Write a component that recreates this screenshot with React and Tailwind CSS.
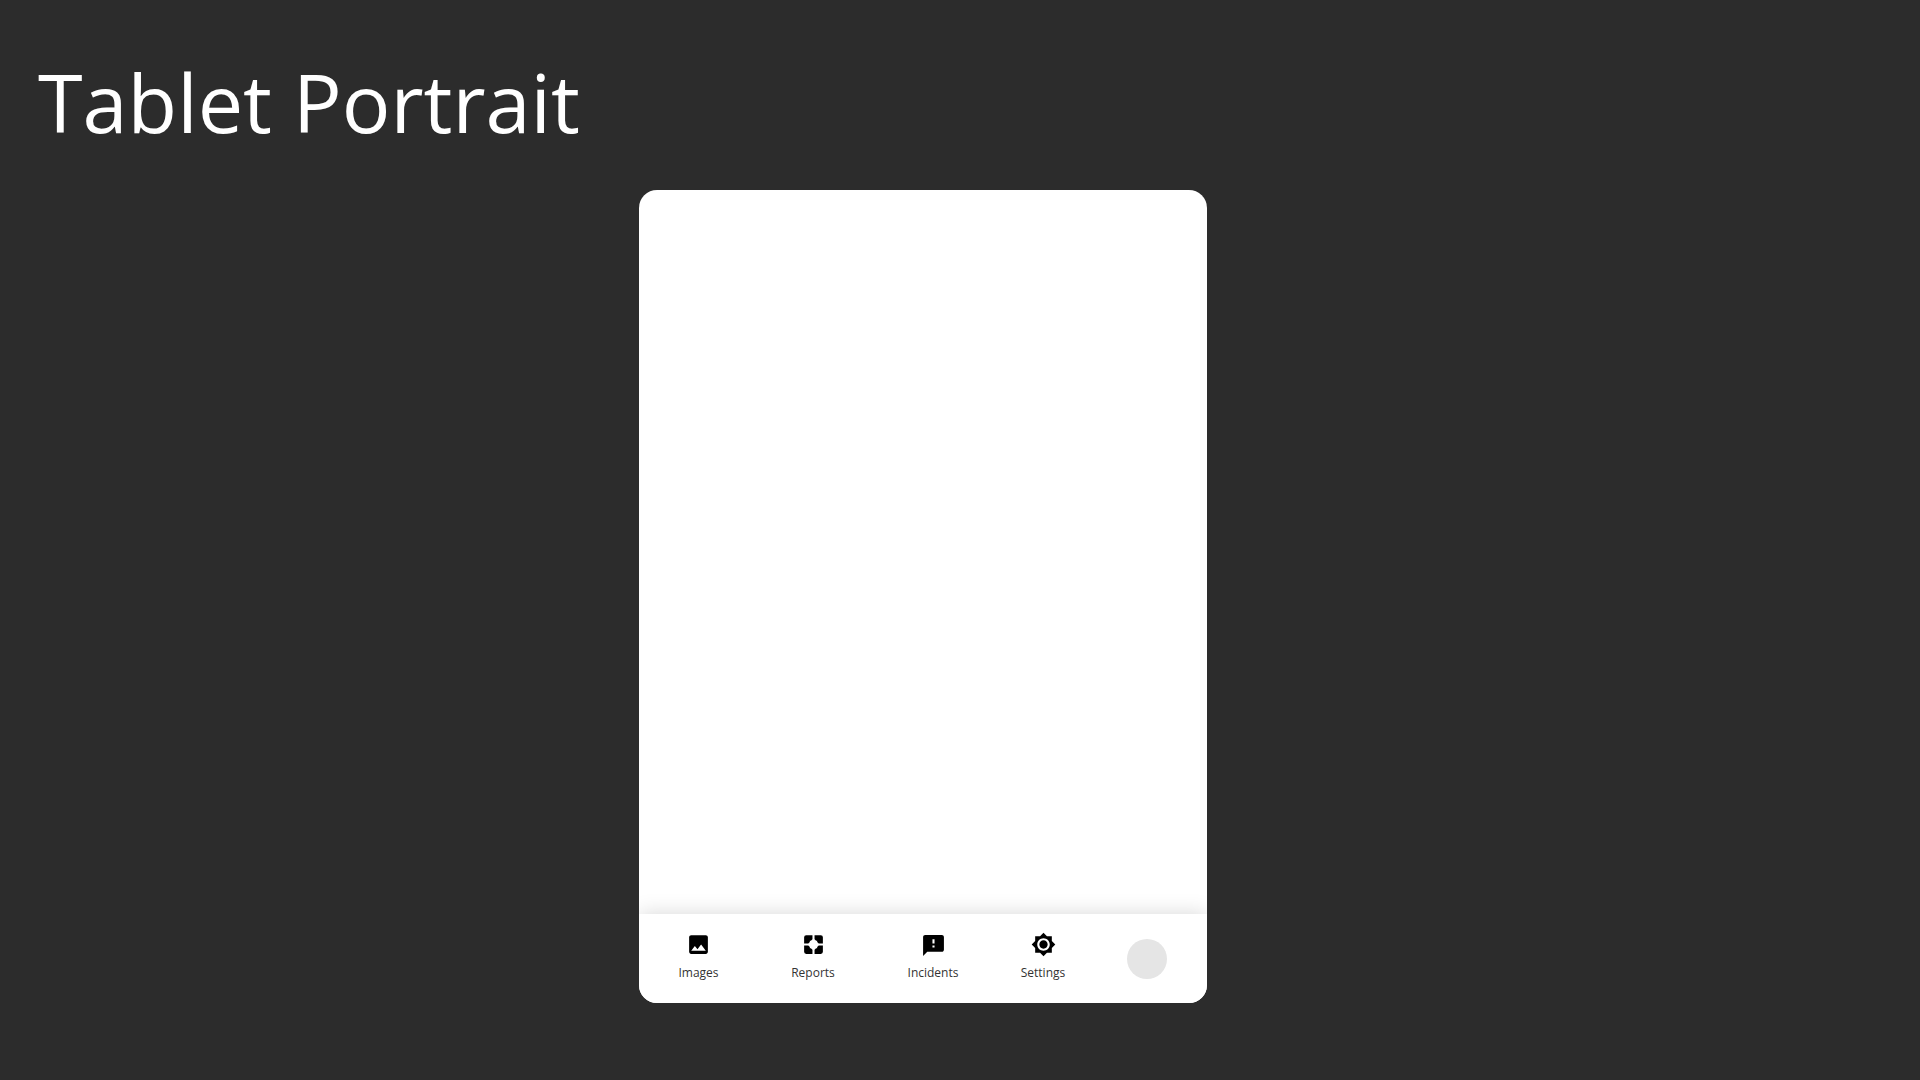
const NavItem = ({ label, className, children }) => (
  <div className={`flex flex-col items-center ${className}`}>
    {children}
    <span className="text-[12px] leading-4 text-[#333333] mt-[8px]">{label}</span>
  </div>
);

const ImageIcon = () => (
  <svg viewBox="0 0 24 24" className="w-[25px] h-[25px]" fill="#000">
    <path d="M21 19V5c0-1.100-.9-2-2-2H5c-1.100 0-2 .9-2 2v14c0 1.100.9 2 2 2h14c1.100 0 2-.9 2-2zM8.500 13.500l2.500 3.010L14.500 12l4.500 6H5l3.500-4.500z" />
  </svg>
);

const ReportIcon = () => (
  <svg viewBox="0 0 24 24" className="w-[25px] h-[25px]" fill="#000">
    <path fillRule="evenodd" d="M5 3h14a2 2 0 0 1 2 2v14a2 2 0 0 1-2 2H5a2 2 0 0 1-2-2V5a2 2 0 0 1 2-2zM11 3v4L9.500 8.500h-1v1L7 11H3v2h4l1.500 1.500v1h1L11 17v4h2v-4l1.500-1.500h1v-1L17 13h4v-2h-4l-1.500-1.500v-1h-1L13 7V3z" />
  </svg>
);

const IncidentIcon = () => (
  <svg viewBox="0 0 24 24" className="w-[25px] h-[25px] translate-y-[1px]" fill="#000">
    <path d="M20 2H4c-1.100 0-1.990.9-1.990 2L2 22l4-4h14c1.100 0 2-.9 2-2V4c0-1.100-.9-2-2-2zm-7 12h-2v-2h2v2zm0-4h-2V6h2v4z" />
  </svg>
);

const SettingsIcon = () => (
  <svg viewBox="0 0 24 24" className="w-[25px] h-[25px]" fill="#000">
    <path d="M20 8.690V4h-4.690L12 .690 8.690 4H4v4.690L.690 12 4 15.310V20h4.690L12 23.310 15.310 20H20v-4.690L23.310 12 20 8.690zM12 18c-3.310 0-6-2.690-6-6s2.690-6 6-6 6 2.690 6 6-2.690 6-6 6zm0-10c-2.210 0-4 1.790-4 4s1.790 4 4 4 4-1.790 4-4-1.790-4-4-4z" />
  </svg>
);

export default function App() {
  return (
    <div className="min-h-[1080px] bg-[#2c2c2c] font-['Open_Sans',sans-serif] overflow-hidden">
      <h1 className="pl-[38px] pt-[47px] text-[81px] leading-[110px] font-normal text-white h-[190px]">
        Tablet Portrait
      </h1>
      <div className="ml-[639px] w-[568px] h-[813px] bg-white rounded-[18px] overflow-hidden flex flex-col justify-end">
        <div className="h-[89px] bg-white shadow-[0_0_20px_rgba(0,0,0,0.16)] flex items-start pl-[39px] pt-[18px]">
          <NavItem label="Images" className="w-[41px]"><ImageIcon /></NavItem>
          <NavItem label="Reports" className="w-[44px] ml-[72px]"><ReportIcon /></NavItem>
          <NavItem label="Incidents" className="w-[52px] ml-[72px]"><IncidentIcon /></NavItem>
          <NavItem label="Settings" className="w-[46px] ml-[61px]"><SettingsIcon /></NavItem>
          <div className="w-10 h-10 ml-[61px] mt-[7px] rounded-full bg-[#e5e5e5]" />
        </div>
      </div>
    </div>
  );
}
